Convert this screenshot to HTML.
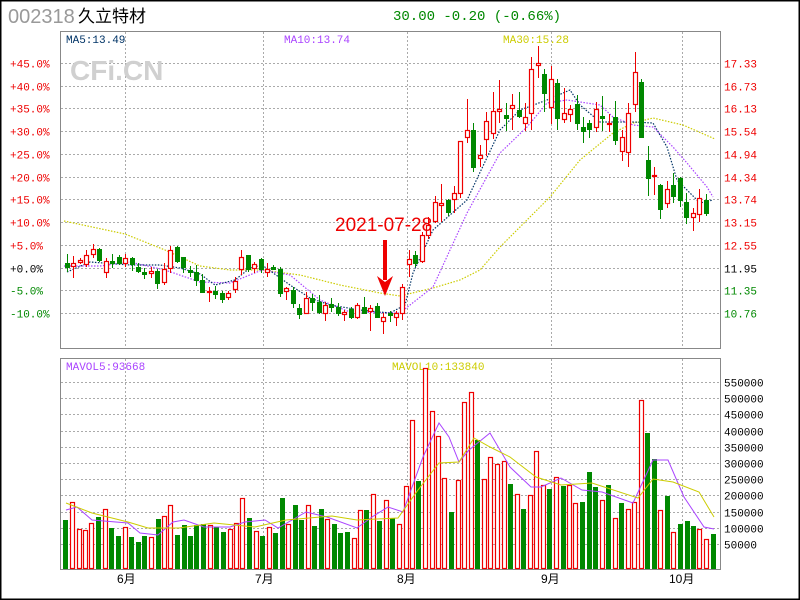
<!DOCTYPE html>
<html><head><meta charset="utf-8"><style>
body{margin:0;background:#fff}
#w{position:relative;width:800px;height:600px;overflow:hidden;background:#fff}
svg{position:absolute;left:0;top:0}
</style></head><body><div id="w">
<svg id="s" width="800" height="600" xmlns="http://www.w3.org/2000/svg" font-family="Liberation Mono, monospace">
<rect x="0.5" y="0.5" width="799" height="599" fill="none" stroke="#000" stroke-width="2"/>
<text x="8" y="23" font-family="Liberation Sans, sans-serif" font-size="20" fill="#999">002318</text>
<text x="78" y="22" font-family="Liberation Sans, Noto Sans CJK SC, sans-serif" font-size="17" fill="#000">久立特材</text>
<text x="393" y="20" font-size="14" fill="#080">30.00 -0.20 (-0.66%)</text>
<g id="grid" stroke="#aaa" stroke-dasharray="2,2" stroke-width="1"></g>
<rect x="60.5" y="31.5" width="660" height="317" fill="none" stroke="#888"/>
<rect x="60.5" y="358.5" width="660" height="211" fill="none" stroke="#888"/>
<text x="70" y="80" font-family="Liberation Sans, sans-serif" font-weight="bold" font-size="28" fill="#d0d0d0">CFi.CN</text>
<text x="66" y="43" font-size="11" fill="#036">MA5:13.49</text>
<text x="284" y="43" font-size="11" fill="#a4f">MA10:13.74</text>
<text x="503" y="43" font-size="11" fill="#cc0">MA30:15.28</text>
<text x="66" y="370" font-size="11" fill="#a4f">MAVOL5:93668</text>
<text x="392" y="370" font-size="11" fill="#cc0">MAVOL10:133840</text>
<g id="lab" font-size="11"></g>
<g id="ma" fill="none" stroke-width="1.2" stroke-dasharray="1.5,1.5"></g>
<g id="c"></g>
<g id="v"></g>
<text x="335" y="231" font-family="Liberation Sans, sans-serif" font-size="19" fill="#e00">2021-07-28</text>
<rect x="383" y="240" width="4" height="40" fill="#e00"/>
<polygon points="377,276 385,296 393,276 385,282" fill="#e00"/>
<g font-family="Liberation Sans, Noto Sans CJK SC, sans-serif" font-size="12" fill="#000">
<text x="117" y="583">6月</text><text x="255" y="583">7月</text><text x="397" y="583">8月</text><text x="541" y="583">9月</text><text x="669" y="583">10月</text></g>
</svg>
<script>
var NS="http://www.w3.org/2000/svg";
function el(p,t,a){var e=document.createElementNS(NS,t);for(var k in a)e.setAttribute(k,a[k]);document.getElementById(p).appendChild(e);return e;}
[125,263,407,551,682].forEach(function(x){el("grid","line",{x1:x+.5,x2:x+.5,y1:32,y2:348});el("grid","line",{x1:x+.5,x2:x+.5,y1:359,y2:569});});
var L=["+45.0%","+40.0%","+35.0%","+30.0%","+25.0%","+20.0%","+15.0%","+10.0%","+5.0%","+0.0%","-5.0%","-10.0%"];
var R=["17.33","16.73","16.13","15.54","14.94","14.34","13.74","13.15","12.55","11.95","11.35","10.76"];
for(var k=0;k<12;k++){var y=Math.round(63+k*22.73)+.5;el("grid","line",{x1:61,x2:720,y1:y,y2:y});
var c=k<9?"#e00":(k==9?"#000":"#080");
var t=el("lab","text",{x:10,y:y+4,fill:c});t.textContent=L[k];
t=el("lab","text",{x:724,y:y+4,fill:c});t.textContent=R[k];}
for(k=0;k<11;k++){var y=Math.round(382+k*16.2)+.5;el("grid","line",{x1:61,x2:720,y1:y,y2:y});
var t=el("lab","text",{x:724,y:y+4,fill:"#000"});t.textContent=(550000-k*50000)+"";}
function pl(pts,col,dash){el("ma","polyline",{points:pts,stroke:col,"stroke-dasharray":dash?"1.5,1.5":"none"});}
pl("64,221 125,234 165,250 200,266 230,270 262,270 300,275 340,285 380,293 400,296 433,288 460,280 480,270 500,247 550,197 580,160 613,133 633,123 653,118 683,125 715,139","#cc0",1);
pl("64,266 100,266 130,262 165,270 200,282 230,283 262,270 290,275 320,300 350,312 400,313 410,305 433,287 467,213 500,153 527,127 547,103 567,100 600,105 613,117 633,125 653,127 673,147 687,163 707,187 713,197","#a4f",1);
pl("67,272 90,262 130,265 160,265 180,268 200,274 215,285 235,280 250,268 262,265 290,285 310,298 330,305 360,310 390,313 405,305 413,273 433,230 467,200 500,130 520,110 547,100 570,90 580,105 600,122 633,122 653,123 667,147 677,180 687,190 700,203 713,200","#036",1);
var C=[[263,267,254,272,"g"],[263,266,256,278,"r"],[260,262,258,264,"r"],[255,264,250,267,"r"],[249,254,244,258,"r"],[249,260,248,262,"g"],[261,272,258,278,"r"],[261,263,254,268,"g"],[257,263,255,265,"g"],[258,263,254,267,"r"],[258,264,257,271,"g"],[267,271,263,273,"g"],[272,274,268,279,"g"],[271,273,267,278,"r"],[271,283,269,289,"g"],[269,282,263,285,"r"],[250,268,246,273,"r"],[247,261,246,263,"g"],[257,267,257,273,"g"],[270,272,266,277,"g"],[272,280,265,286,"g"],[280,292,274,293,"g"],[291,292,287,302,"r"],[291,294,286,299,"g"],[293,299,291,303,"g"],[293,297,291,300,"r"],[281,289,277,293,"r"],[257,269,250,275,"r"],[255,269,255,272,"g"],[264,268,262,273,"r"],[259,269,258,273,"g"],[269,272,263,277,"r"],[267,269,265,270,"g"],[269,293,267,297,"g"],[288,291,287,300,"r"],[290,303,287,308,"g"],[308,314,304,319,"g"],[298,313,292,314,"r"],[298,302,294,311,"g"],[302,312,295,314,"g"],[305,313,302,321,"r"],[304,307,298,312,"g"],[307,313,303,316,"g"],[312,314,310,321,"r"],[309,317,307,319,"g"],[305,317,303,319,"r"],[307,313,297,314,"g"],[308,311,305,331,"r"],[306,317,303,317,"g"],[317,321,313,334,"r"],[313,315,311,322,"g"],[313,317,311,326,"r"],
[287,313,284,320,"r"],[259,264,250,277,"r"],[255,263,251,267,"g"],[235,261,232,263,"r"],[225,235,217,239,"r"],[202,221,196,223,"r"],[203,205,184,222,"r"],[200,212,199,216,"g"],[193,199,186,213,"r"],[141,193,141,198,"r"],[130,137,99,143,"r"],[130,167,123,172,"g"],[155,158,145,167,"r"],[121,139,112,156,"r"],[111,133,92,139,"r"],[109,111,80,123,"r"],[115,118,103,131,"g"],[105,108,94,130,"r"],[110,116,92,118,"g"],[117,123,103,131,"r"],[69,113,57,130,"r"],[63,65,46,78,"r"],[74,93,69,112,"g"],[79,107,66,124,"r"],[83,118,79,130,"g"],[113,119,88,123,"r"],[109,114,105,122,"r"],[104,123,95,130,"g"],[127,131,117,143,"g"],[123,129,120,138,"g"],[109,127,102,132,"r"],[116,118,96,131,"g"],[123,124,114,132,"r"],[117,140,101,145,"g"],[137,151,130,161,"r"],[113,152,103,167,"r"],[72,104,52,112,"r"],[82,137,79,137,"g"],[160,178,146,196,"g"],[175,176,167,195,"r"],[185,209,184,219,"g"],[189,203,181,208,"r"],[185,196,173,203,"g"],[178,200,177,207,"g"],[202,217,193,224,"g"],[213,217,208,231,"r"],[198,214,189,222,"r"],[200,213,194,216,"g"]];
C.forEach(function(d,i){var x=Math.round(67+i*6.45);var col=d[4]=="r"?"#e00":"#080";
el("c","line",{x1:x+.5,x2:x+.5,y1:d[2],y2:d[3],stroke:col});
var h=Math.max(d[1]-d[0],1);
if(d[4]=="r")el("c","rect",{x:x-1.5,y:d[0]+.5,width:4,height:h,fill:"#fff",stroke:col,"stroke-width":1.2});
else el("c","rect",{x:x-2,y:d[0],width:5,height:h+1,fill:col});});
var V="66 520 g,73 502 r,80 529 r,86 530 r,92 523 r,99 517 g,106 509 r,112 528 g,119 536 g,126 527 r,132 537 g,139 542 g,145 536 g,152 537 r,159 519 g,165 516 r,171 505 r,178 535 g,185 525 g,191 536 g,197 525 g,204 524 g,211 525 r,217 527 g,224 532 g,231 529 r,237 523 r,243 498 r,250 518 g,257 531 r,263 536 g,270 527 r,276 533 g,283 498 g,289 524 r,296 505 g,302 520 g,309 505 r,315 526 g,322 509 g,328 519 r,335 524 g,341 533 g,348 532 g,355 538 r,361 510 r,367 510 g,374 494 r,380 521 g,387 500 r,393 518 g,400 524 r,407 486 r,413 420 r,419 481 g,426 368 r,433 411 r,439 436 r,445 478 r,452 512 g,459 480 r,465 402 r,472 392 r,478 440 g,485 479 r,491 457 r,498 464 r,505 461 r,511 484 g,518 494 r,524 509 g,531 495 r,537 451 r,544 485 r,550 489 g,557 477 r,564 486 g,570 485 r,576 503 r,583 502 g,590 472 g,596 487 g,603 500 r,609 485 g,616 518 r,622 503 g,629 509 r,635 502 r,642 400 r,648 433 g,655 459 g,661 510 r,668 496 g,674 532 r,681 524 g,688 521 g,694 526 g,700 529 r,707 539 r,714 534 g".split(",");
V.forEach(function(s){var p=s.split(" "),x=+p[0],y=+p[1];
if(p[2]=="r")el("v","rect",{x:x-2.5,y:y+.5,width:4,height:569-y-1,fill:"#fff",stroke:"#e00","stroke-width":1.2});
else el("v","rect",{x:x-3,y:y,width:5,height:569-y,fill:"#080"});});
var g=document.getElementById("v");
function vl(pts,col){el("v","polyline",{points:pts,fill:"none",stroke:col,"stroke-width":1});}
vl("66,510 77,507 92,520 128,523 140,533 158,535 173,522 184,520 204,527 230,527 245,522 265,520 278,528 306,512 327,517 357,528 372,517 388,507 403,512 423,457 439,423 449,437 459,462 469,450 490,433 510,467 531,487 541,487 561,478 582,490 602,492 633,503 653,460 668,460 684,497 704,527 714,529","#a4f");
vl("66,503 92,513 128,522 148,528 179,528 214,523 255,527 286,520 332,516 357,520 398,518 418,490 439,463 459,462 474,438 490,447 510,457 536,477 561,485 592,483 638,498 653,479 673,482 699,492 714,517","#cc0");
</script>
</div></body></html>
